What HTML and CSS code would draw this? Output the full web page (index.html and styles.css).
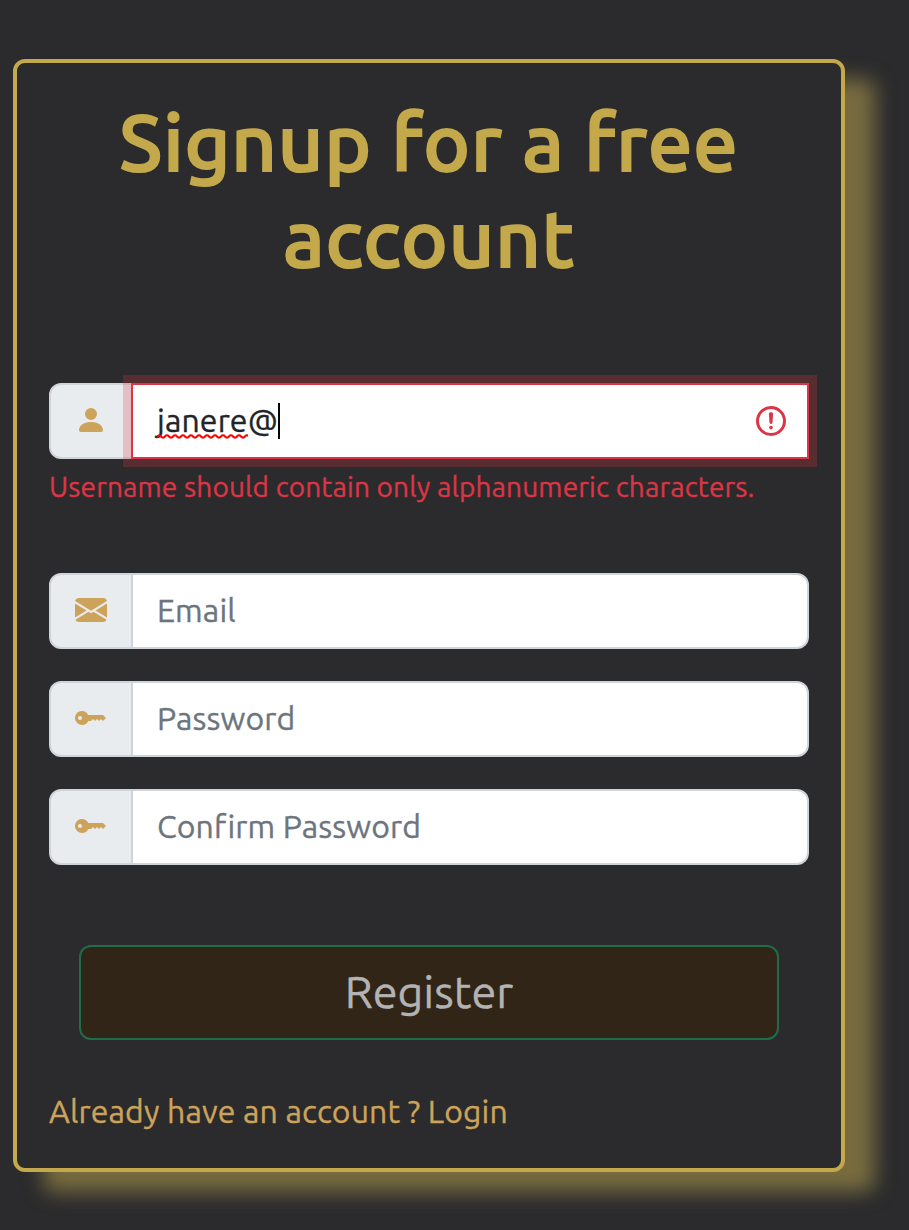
FILE: index.html
```html
<!DOCTYPE html>
<html lang="en">
<head>
<meta charset="utf-8">
<title>Signup</title>
<link rel="stylesheet" href="styles.css">
</head>
<body>
<main class="card">
  <h1 class="title">Signup for a free<br>account</h1>
  <form class="form">
    <div class="group first">
      <span class="addon"><svg class="icon" viewBox="0 0 16 16"><path d="M3 14s-1 0-1-1 1-4 6-4 6 3 6 4-1 1-1 1H3zm5-6a3 3 0 1 0 0-6 3 3 0 0 0 0 6z"/></svg></span>
      <div class="field invalid"><span class="value"><span class="word">janere<svg class="squiggle" viewBox="0 0 91 5"><path d="M0 3.2 Q2 .2 4 2.5 T8 2.5 T12 2.5 T16 2.5 T20 2.5 T24 2.5 T28 2.5 T32 2.5 T36 2.5 T40 2.5 T44 2.5 T48 2.5 T52 2.5 T56 2.5 T60 2.5 T64 2.5 T68 2.5 T72 2.5 T76 2.5 T80 2.5 T84 2.5 T88 2.5 T92 2.5"/></svg></span>@</span><span class="caret"></span>
        <svg class="alert" viewBox="0 0 12 12"><circle cx="6" cy="6" r="4.5"/><path d="M5.8 3.6h.4L6 6.5z"/><circle class="dot" cx="6" cy="8.2" r=".6"/></svg></div>
    </div>
    <p class="error">Username should contain only alphanumeric characters.</p>
    <div class="group">
      <span class="addon"><svg class="icon" viewBox="0 0 16 16"><path d="M.05 3.555A2 2 0 0 1 2 2h12a2 2 0 0 1 1.95 1.555L8 8.414.05 3.555zM0 4.697v7.104l5.803-3.558L0 4.697zM6.761 8.83l-6.57 4.027A2 2 0 0 0 2 14h12a2 2 0 0 0 1.808-1.144l-6.57-4.027L8 9.586l-1.239-.757zm3.436-.586L16 11.801V4.697l-5.803 3.546z"/></svg></span>
      <div class="field"><span class="hint">Email</span></div>
    </div>
    <div class="group">
      <span class="addon"><svg class="icon" viewBox="0 0 16 16"><path d="M3.5 11.5a3.5 3.5 0 1 1 3.163-5H14L15.5 8 14 9.5l-1-1-1 1-1-1-1 1-1-1-1 1H6.663a3.5 3.5 0 0 1-3.163 2zM2.5 9a1 1 0 1 0 0-2 1 1 0 0 0 0 2z"/></svg></span>
      <div class="field"><span class="hint">Password</span></div>
    </div>
    <div class="group">
      <span class="addon"><svg class="icon" viewBox="0 0 16 16"><path d="M3.5 11.5a3.5 3.5 0 1 1 3.163-5H14L15.5 8 14 9.5l-1-1-1 1-1-1-1 1-1-1-1 1H6.663a3.5 3.5 0 0 1-3.163 2zM2.5 9a1 1 0 1 0 0-2 1 1 0 0 0 0 2z"/></svg></span>
      <div class="field"><span class="hint">Confirm Password</span></div>
    </div>
    <button class="register" type="button">Register</button>
    <a class="login">Already have an account ? Login</a>
  </form>
</main>
</body>
</html>
```
FILE: styles.css
```css
* { box-sizing: border-box; }
body {
  margin: 0;
  height: 1230px;
  overflow: hidden;
  padding: 59px 64px 0 13px;
  background: #2b2b2d;
  font-family: Ubuntu, "Noto Sans", sans-serif;
  font-size: 32px;
  letter-spacing: .12px;
  -webkit-text-stroke: .35px currentColor;
}
.card {
  height: 1113px;
  padding: 31px 32px 32px;
  border: 4px solid #c3a94b;
  border-radius: 12px;
  background: #2b2b2d;
  box-shadow: 30px 20px 20px #786c3f;
}
.title {
  margin: 0;
  color: #c3a94b;
  font-size: 79px;
  font-weight: 500;
  line-height: 96px;
  letter-spacing: .95px;
  -webkit-text-stroke: 2px currentColor;
  text-align: center;
  white-space: nowrap;
}
.form { display: flex; flex-direction: column; padding-top: 97px; }
.group { display: flex; height: 76px; margin-bottom: 32px; }
.group.first { margin-bottom: 0; }
.addon {
  display: flex;
  align-items: center;
  width: 84px;
  padding: 0 0 2px 24px;
  border: 2px solid #ced4da;
  border-radius: 12px 0 0 12px;
  background: #e9ecef;
}
.icon { width: 32px; height: 32px; fill: #cda35b; }
.field {
  display: flex;
  flex: 1;
  align-items: center;
  margin-left: -2px;
  padding: 0 24px;
  border: 2px solid #ced4da;
  border-radius: 0 12px 12px 0;
  background: #fff;
  color: #212529;
  line-height: 48px;
  white-space: nowrap;
}
.invalid {
  position: relative;
  border-color: #dc3545;
  border-radius: 0;
  box-shadow: 0 0 0 8px rgba(220, 53, 69, .25);
}
.value, .hint { padding-bottom: 3px; }
.hint { color: #6c757d; }
.word { position: relative; }
.squiggle {
  position: absolute;
  left: 0;
  bottom: -1px;
  width: 91px;
  height: 5px;
  fill: none;
  stroke: #f00;
  stroke-width: 2;
}
.caret { width: 2px; height: 36px; background: #000; }
.alert {
  width: 36px;
  height: 36px;
  margin: 0 -6px 0 auto;
  fill: none;
  stroke: #dc3545;
  stroke-linejoin: round;
}
.alert .dot { fill: #dc3545; stroke: none; }
.error {
  margin: 7px 0 65px;
  height: 42px;
  color: #dc3545;
  font-size: 28px;
  line-height: 42px;
  letter-spacing: .14px;
  white-space: nowrap;
}
.register {
  height: 95px;
  margin: 48px 30px 47px;
  padding: 0 0 2px;
  border: 2px solid #216c48;
  border-radius: 12px;
  background: #302517;
  color: #b3b3b3;
  font: 45px/60px Ubuntu, "Noto Sans", sans-serif;
}
.login { color: #cda35b; line-height: 48px; letter-spacing: .14px; white-space: nowrap; }
```
